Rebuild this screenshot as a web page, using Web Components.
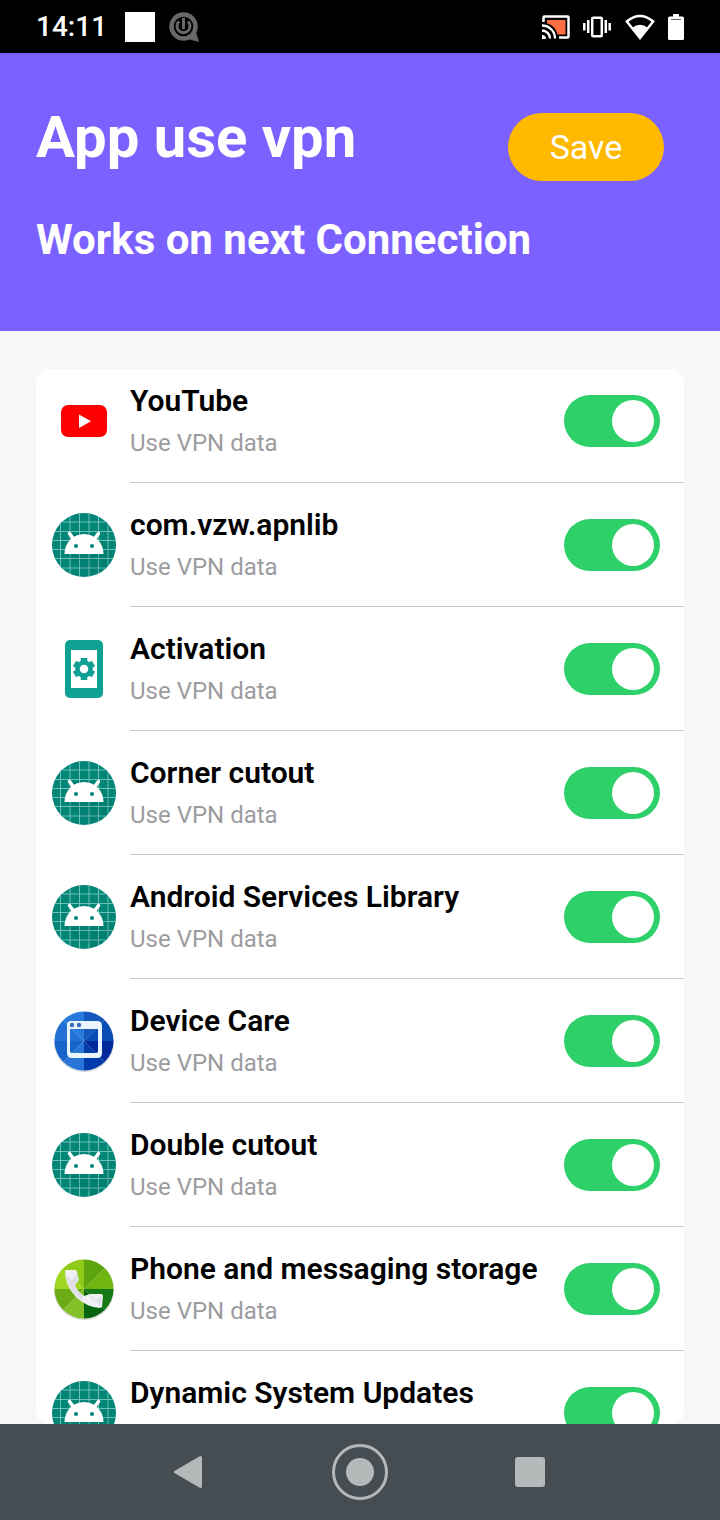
<!DOCTYPE html>
<html lang="en">
<head>
<meta charset="utf-8">
<meta name="viewport" content="width=device-width, initial-scale=1">
<title>App use vpn</title>
<style>
	body{
		margin:0;
		height:100vh;
		display:flex;
		flex-direction:column;
		background-color:#f7f7f7;
		font-family:Roboto, "Liberation Sans", sans-serif;
		overflow:hidden;
	}
</style>
</head>
<body>

<status-bar>14:11</status-bar>

<page-header>
	App use vpn
	<span slot="note">Works on next Connection</span>
</page-header>

<app-list>
	<app-row icon="youtube">YouTube</app-row>
	<app-row icon="android">com.vzw.apnlib</app-row>
	<app-row icon="activation">Activation</app-row>
	<app-row icon="android">Corner cutout</app-row>
	<app-row icon="android">Android Services Library</app-row>
	<app-row icon="care">Device Care</app-row>
	<app-row icon="android">Double cutout</app-row>
	<app-row icon="phone">Phone and messaging storage</app-row>
	<app-row icon="android">Dynamic System Updates</app-row>
</app-list>

<nav-bar></nav-bar>

<script>
// crea el template de cada componente
function makeTemplate( html ){
	const template = document.createElement('template');
	template.innerHTML = html;
	return template;
}

const statusTemplate = makeTemplate(`
	<style>
		:host{
			display:flex;
			flex:none;
			align-items:center;
			height:53px;
			padding:0 36px;
			box-sizing:border-box;
			background-color:#000;
			color:white;
			font-size:28px;
			font-weight:500;
		}

		svg{
			display:block;
		}

		.notifications{
			display:flex;
			gap:14px;
			margin-left:18px;
		}

		.system{
			display:flex;
			align-items:center;
			gap:13px;
			margin-left:auto;
		}
	</style>

	<span><slot></slot></span>

	<div class="notifications">
		<svg width="30" height="30"><rect width="30" height="30" fill="#fff"/></svg>
		<svg width="30" height="30" viewBox="0 0 30 30" fill="none" stroke="#686868">
			<circle cx="14.500" cy="14.500" r="12" stroke-width="4.500"/>
			<path d="M27 20l3 10-11-3z" fill="#686868" stroke="none"/>
			<path d="M10 9.500a6.500 6.500 0 1 0 9 0" stroke-width="3"/>
			<path d="M14.500 6v11" stroke-width="3"/>
		</svg>
	</div>

	<div class="system">
		<svg width="28" height="24" viewBox="0 0 28 24" fill="none" stroke="#fff">
			<path d="M5 5h18.500v14.500h-8C14 13 10 9.500 5 8.500z" fill="#ff6e40" stroke="none"/>
			<path d="M1.500 7V2.500Q1.500 1.500 2.500 1.500h23Q26.500 1.500 26.500 2.500v19Q26.500 22.500 25.500 22.500H17" stroke-width="2.500"/>
			<path d="M0 10.500A13 13 0 0 1 13 23.500M0 15.500A8 8 0 0 1 8 23.500" stroke-width="2.300"/>
			<path d="M0 20a4 4 0 0 1 4 4H0z" fill="#fff" stroke="none"/>
		</svg>
		<svg width="28" height="22" viewBox="0 0 28 22" fill="none" stroke="#fff" stroke-width="2.500">
			<rect x="9.200" y="1.800" width="9.600" height="18.400" rx="1"/>
			<path d="M5.200 4v13M22.800 4v13M1.300 7v7.500M26.700 7v7.500"/>
		</svg>
		<svg width="31" height="26" viewBox="0 0 31 26">
			<path d="M16 24L2.800 7.500Q16-3.500 29.200 7.500z" fill="none" stroke="#fff" stroke-width="2.500"/>
			<path d="M16 24L8 14Q16 7.500 24 14z" fill="#fff"/>
		</svg>
		<svg width="16" height="26" viewBox="0 0 16 26" fill="#fff">
			<path d="M5 0h6v2.500h3.500Q16 2.500 16 4v20.500Q16 26 14.500 26h-13Q0 26 0 24.500V4Q0 2.500 1.500 2.500H5z"/>
			<path d="M3 5.500h10" stroke="#666"/>
		</svg>
	</div>
`);

class StatusBar extends HTMLElement{

	constructor(){

		super();
		this.attachShadow({mode:'open'})
		this.shadowRoot.appendChild(statusTemplate.content.cloneNode(true));

	}

}
window.customElements.define('status-bar', StatusBar);


const headerTemplate = makeTemplate(`
	<style>
		:host{
			display:block;
			flex:none;
			padding:50px 56px 66px 36px;
			background-color:#7b61ff;
			color:white;
		}

		.top{
			display:flex;
			align-items:flex-start;
			justify-content:space-between;
			padding-bottom:34px;
		}

		h1{
			margin:0;
			font-size:58px;
			line-height:68px;
			font-weight:700;
		}

		h2{
			margin:0;
			font-size:42px;
			line-height:50px;
			font-weight:700;
		}

		button{
			width:156px;
			height:68px;
			margin-top:10px;
			padding:0;
			border:0;
			border-radius:34px;
			background-color:#ffb900;
			color:white;
			font:400 34px Roboto, "Liberation Sans", sans-serif;
			cursor:pointer;
		}

		button:hover{
			opacity:0.9;
		}
	</style>

	<div class="top">
		<h1><slot></slot></h1>
		<button type="button">Save</button>
	</div>
	<h2><slot name="note"></slot></h2>
`);

class PageHeader extends HTMLElement{

	constructor(){

		super();
		this.attachShadow({mode:'open'})
		this.shadowRoot.appendChild(headerTemplate.content.cloneNode(true));

	}

}
window.customElements.define('page-header', PageHeader);


const listTemplate = makeTemplate(`
	<style>
		:host{
			display:flex;
			flex:1;
			min-height:0;
			padding:38px 36px 0;
		}

		.card{
			flex:1;
			overflow:hidden;
			border-radius:14px;
			background-color:white;
		}

		/* the first row sits closer to the edge of the card */
		.rows{
			margin-top:-10px;
		}
	</style>

	<div class="card">
		<div class="rows"><slot></slot></div>
	</div>
`);

class AppList extends HTMLElement{

	constructor(){

		super();
		this.attachShadow({mode:'open'})
		this.shadowRoot.appendChild(listTemplate.content.cloneNode(true));

	}

}
window.customElements.define('app-list', AppList);


const icons = {

	youtube: `
		<rect x="9" y="16" width="46" height="32" rx="7" fill="#f00"/>
		<path d="M27 25.500v13.500l12-6.750z" fill="#fff"/>`,

	android: `
		<defs><clipPath id="round"><circle cx="32" cy="32" r="32"/></clipPath></defs>
		<g clip-path="url(#round)">
			<rect width="64" height="64" fill="#008577"/>
			<path d="M8.500 0v64M18 0v64M27.500 0v64M37 0v64M46.500 0v64M56 0v64M0 9h64M0 18.500h64M0 27.500h64M0 36.500h64M0 45.500h64M0 55h64" stroke="#6fbfb5" stroke-width="1"/>
			<path d="M13 41l12 12 20 11h19V43L49 28z" fill="#00574b" opacity=".1"/>
		</g>
		<path d="M12.500 41a19.500 20 0 0 1 39 0z" fill="#fff"/>
		<path d="M17.500 20.500l4.500 6M46.500 20.500l-4.500 6" stroke="#fff" stroke-width="3.500" stroke-linecap="round"/>
		<circle cx="24" cy="33" r="2" fill="#008577"/>
		<circle cx="40" cy="33" r="2" fill="#008577"/>`,

	activation: `
		<rect x="13" y="3" width="38" height="58" rx="5" fill="#10a195"/>
		<rect x="19" y="13" width="26" height="38" fill="#fff"/>
		<circle cx="32" cy="32" r="6.500" fill="none" stroke="#10a195" stroke-width="4.500"/>
		<path d="M32 21v4M32 39v4M22.500 26.500l3.400 2M38.100 35.500l3.400 2M22.500 37.500l3.400-2M38.100 28.500l3.400-2" stroke="#10a195" stroke-width="6.500"/>`,

	care: `
		<circle cx="32" cy="33" r="30" fill="#b9bec9" opacity=".6"/>
		<defs><clipPath id="disc"><circle cx="32" cy="32" r="29.500"/></clipPath></defs>
		<g clip-path="url(#disc)">
			<path d="M0 0h32v32z" fill="#287bdc"/>
			<path d="M0 0v32h32z" fill="#2272d5"/>
			<path d="M32 0v32L64 0z" fill="#1258bd"/>
			<path d="M32 32L64 0v32z" fill="#074bb3"/>
			<path d="M32 32h32v32z" fill="#01299b"/>
			<path d="M32 32v32h32z" fill="#003bab"/>
			<path d="M0 32h32L0 64z" fill="#1765cb"/>
			<path d="M0 64l32-32v32z" fill="#2975d7"/>
		</g>
		<path d="M19 12h26q5 0 5 5v27q0 5-5 5H20q-5 0-5-5V16q0-4 4-4zm0 8q-1 0-1 1v21q0 2 2 2h24q2 0 2-2V21q0-1-1-1z" fill="#eaf5ff" fill-rule="evenodd"/>
		<circle cx="20" cy="16" r="2.200" fill="#376ebc"/>
		<circle cx="27" cy="16" r="2.200" fill="#376ebc"/>`,

	phone: `
		<circle cx="32" cy="33" r="30" fill="#b9c2af" opacity=".6"/>
		<defs><clipPath id="disc"><circle cx="32" cy="32" r="29.500"/></clipPath></defs>
		<g clip-path="url(#disc)">
			<path d="M0 0h32v32z" fill="#90ca18"/>
			<path d="M0 0v32h32z" fill="#a1d621"/>
			<path d="M32 0v32L64 0z" fill="#5da40e"/>
			<path d="M32 32L64 0v32z" fill="#70b613"/>
			<path d="M32 32h32v32z" fill="#157a16"/>
			<path d="M32 32v32h32z" fill="#08650f"/>
			<path d="M0 32h32L0 64z" fill="#6cad17"/>
			<path d="M0 64l32-32v32z" fill="#83bf26"/>
		</g>
		<path d="M14 13h9q2 0 2 2l2 8-4 5q2 6 9 11l6-2h11q2 0 2 2l-1 11-2 1Q34 50 24 40 13 29 13 14z" fill="#f0f0f5"/>
		<path d="M14 19l6 4 5-7 2 7-4 5q2 6 9 11l-3 4Q16 34 14 19zM38 37l3 7 9-5-1 11z" fill="#c9c9d5" opacity=".4"/>`

};

const rowTemplate = makeTemplate(`
	<style>
		:host{
			display:flex;
			align-items:stretch;
			height:124px;
			padding-left:16px;
		}

		.icon{
			flex:none;
			align-self:center;
			width:64px;
			height:64px;
			margin-right:14px;
		}

		.content{
			flex:1;
			display:flex;
			align-items:center;
			justify-content:space-between;
			padding-right:24px;
			border-bottom:1px solid #c6c6c8;
		}

		label{
			display:flex;
			flex-direction:column;
			gap:8px;
			cursor:pointer;
		}

		.name{
			font-size:30px;
			line-height:36px;
			font-weight:600;
			color:#000;
		}

		.detail{
			font-size:24px;
			line-height:32px;
			color:#9c9c9f;
		}

		input{
			appearance:none;
			display:flex;
			flex:none;
			align-items:center;
			width:96px;
			height:52px;
			margin:0;
			padding:0 6px;
			box-sizing:border-box;
			border-radius:26px;
			background-color:#d5d5d8;
			cursor:pointer;
		}

		input::before{
			content:"";
			width:42px;
			height:42px;
			border-radius:50%;
			background-color:white;
		}

		input:checked{
			justify-content:flex-end;
			background-color:#2ed169;
		}
	</style>

	<svg class="icon" viewBox="0 0 64 64" aria-hidden="true"></svg>
	<div class="content">
		<label for="use-vpn">
			<span class="name"><slot></slot></span>
			<span class="detail">Use VPN data</span>
		</label>
		<input type="checkbox" id="use-vpn" checked>
	</div>
`);

class AppRow extends HTMLElement{

	constructor(){

		super();
		this.attachShadow({mode:'open'})
		this.shadowRoot.appendChild(rowTemplate.content.cloneNode(true));

	}

	connectedCallback(){
		this.shadowRoot.querySelector('.icon').innerHTML = icons[this.getAttribute('icon')];
	}

}
window.customElements.define('app-row', AppRow);


const navTemplate = makeTemplate(`
	<style>
		:host{
			display:flex;
			flex:none;
			align-items:center;
			justify-content:center;
			gap:114px;
			height:96px;
			background-color:#454d52;
		}

		button{
			width:56px;
			height:56px;
			padding:0;
			border:0;
			background:none;
			cursor:pointer;
		}

		svg{
			display:block;
		}
	</style>

	<button type="button" aria-label="Back">
		<svg width="56" height="56"><path d="M13.500 28L38.500 13.500v29z" fill="#b5b9ba" stroke="#b5b9ba" stroke-width="3" stroke-linejoin="round"/></svg>
	</button>
	<button type="button" aria-label="Home">
		<svg width="56" height="56">
			<circle cx="28" cy="28" r="26.500" fill="none" stroke="#b5b9ba" stroke-width="3"/>
			<circle cx="28" cy="28" r="14" fill="#b5b9ba"/>
		</svg>
	</button>
	<button type="button" aria-label="Recent apps">
		<svg width="56" height="56"><rect x="13" y="13" width="30" height="30" rx="3" fill="#b5b9ba"/></svg>
	</button>
`);

class NavBar extends HTMLElement{

	constructor(){

		super();
		this.attachShadow({mode:'open'})
		this.shadowRoot.appendChild(navTemplate.content.cloneNode(true));

	}

}
window.customElements.define('nav-bar', NavBar);
</script>
</body>
</html>
